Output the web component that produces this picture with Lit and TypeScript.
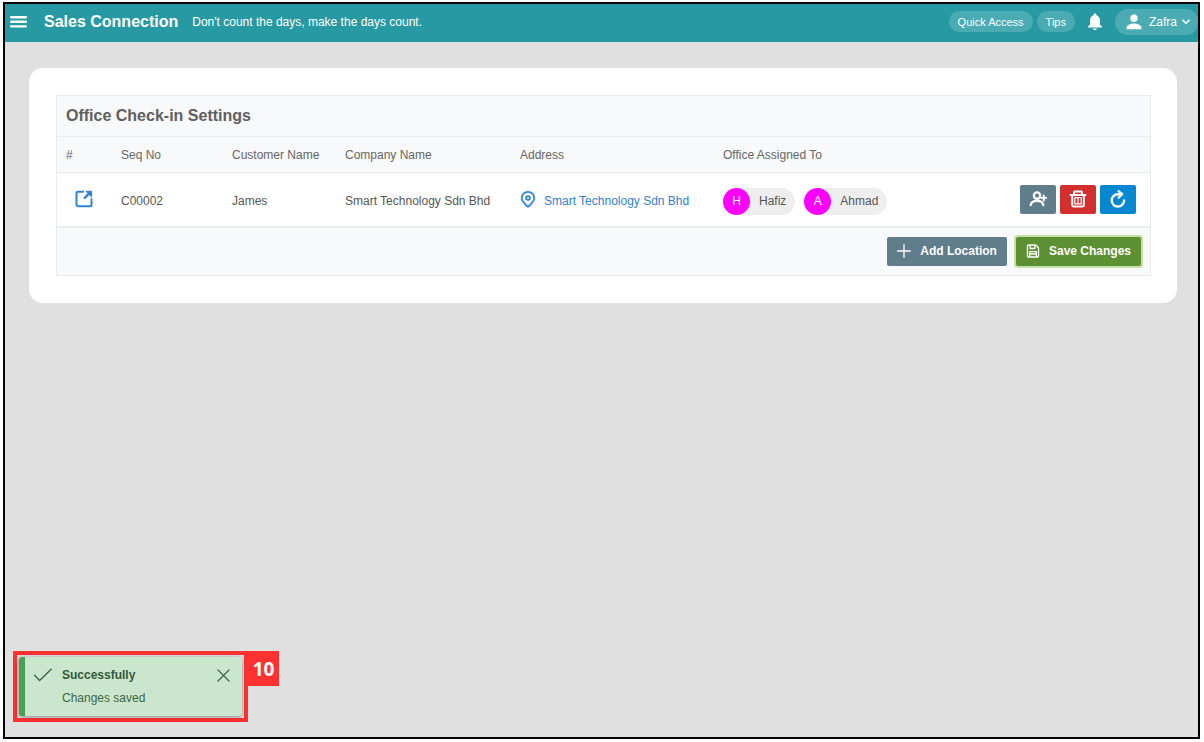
import { LitElement, html, css } from "lit";
import { customElement, property, state } from "lit/decorators.js";

interface Office {
  seq: string;
  customer: string;
  company: string;
  address: string;
  assigned: string[];
}

const icons = {
  menu: html`<svg width="18" height="12" viewBox="0 0 18 12" fill="currentColor" aria-hidden="true">
    <rect y="0" width="17" height="2.4" rx="1" /><rect y="4.6" width="17" height="2.4" rx="1" /><rect y="9.2" width="17" height="2.4" rx="1" /></svg>`,
  bell: html`<svg width="16" height="18" viewBox="0 0 16 18" fill="currentColor" aria-hidden="true">
    <path d="M8 0.4a1.4 1.4 0 0 1 1.4 1.4v.5C11.6 2.9 12.9 4.9 12.9 7.3v4.2l2 2.100v1H1.100v-1l2-2.100V7.3c0-2.400 1.300-4.400 3.500-5v-.5A1.400 1.400 0 0 1 8 .4zM6.200 15.500h3.600a1.800 1.800 0 0 1-3.600 0z" /></svg>`,
  user: html`<svg width="16" height="16" viewBox="0 0 16 16" fill="currentColor" aria-hidden="true">
    <circle cx="8" cy="4.3" r="3.7" /><path d="M.6 15.200v-1.600c0-2.500 4.800-4 7.400-4s7.400 1.500 7.400 4v1.600z" /></svg>`,
  chevron: html`<svg width="8" height="6" viewBox="0 0 8 6" fill="none" stroke="currentColor" stroke-width="1.6" stroke-linecap="round" stroke-linejoin="round" aria-hidden="true">
    <path d="M1 1.200l3 3 3-3" /></svg>`,
  open: html`<svg width="18" height="18" viewBox="0 0 18 18" fill="none" stroke="currentColor" stroke-width="2" stroke-linejoin="round" stroke-linecap="round" aria-hidden="true">
    <path d="M8.200 1.800H3A1.500 1.500 0 0 0 1.500 3.300v11.400A1.500 1.500 0 0 0 3 16.200h12a1.500 1.500 0 0 0 1.500-1.500V9.200" /><path d="M9.800 7.800l4.400-4.400" stroke-width="2.400" /><path d="M11.200 1.300h5.400v5.400z" fill="currentColor" stroke-width="1" /></svg>`,
  pin: html`<svg width="16" height="17" viewBox="0 0 16 17" fill="none" stroke="currentColor" stroke-width="1.8" stroke-linejoin="round" aria-hidden="true">
    <path d="M8 15.800C4.500 12.800 1.700 10.400 1.700 7a6.300 6.100 0 0 1 12.600 0c0 3.400-2.800 5.800-6.300 8.800z" /><circle cx="8" cy="7" r="1.900" /></svg>`,
  assign: html`<svg width="18" height="16" viewBox="0 0 18 16" fill="none" stroke="currentColor" stroke-width="2.200" stroke-linecap="round" aria-hidden="true">
    <circle cx="8" cy="4.600" r="3.200" /><path d="M1.600 14.200c.5-2.900 2.800-4.400 6.400-4.400s5.900 1.500 6.400 4.400" /><path d="M14.800 4.400v5M12.300 6.900h5" stroke-width="1.900" /></svg>`,
  trash: html`<svg width="18" height="18" viewBox="0 0 18 18" fill="none" stroke="currentColor" stroke-width="2" stroke-linecap="round" stroke-linejoin="round" aria-hidden="true">
    <path d="M1.500 5h15M4.800 4.800l.6-3.300h7.200l.6 3.300M3.200 5.200V15a1.500 1.500 0 0 0 1.500 1.500h8.600a1.500 1.500 0 0 0 1.500-1.500V5.200" /><path d="M5.800 7.600h6.400v6.200H5.800zM9 7.600v6.200" stroke-width="1.200" /></svg>`,
  refresh: html`<svg width="18" height="18" viewBox="0 0 18 18" fill="none" stroke="currentColor" stroke-width="2.400" stroke-linecap="round" aria-hidden="true">
    <path d="M10.500 4.200H8.800a6.200 6.200 0 1 0 6.300 6.200" /><path d="M9.600 1.200l3.600 3-3.600 3.400" stroke-width="2.200" stroke-linejoin="round" /></svg>`,
  plus: html`<svg width="14" height="14" viewBox="0 0 14 14" fill="none" stroke="currentColor" stroke-width="1.300" stroke-linecap="round" aria-hidden="true"><path d="M7 .7v12.600M.7 7h12.600" /></svg>`,
  save: html`<svg width="14" height="14" viewBox="0 0 14 14" fill="none" stroke="currentColor" stroke-width="1.300" stroke-linejoin="round" aria-hidden="true">
    <path d="M1.500 2a1 1 0 0 1 1-1h7.200l2.800 2.800V12a1 1 0 0 1-1 1h-9a1 1 0 0 1-1-1z" /><path d="M4.200 1.200v3.300h4.600V1.200M3.700 12.800V7.600h6.600v5.200M3.700 10h6.600" /></svg>`,
  check: html`<svg width="20" height="14" viewBox="0 0 20 14" fill="none" stroke="currentColor" stroke-width="1.400" stroke-linecap="round" stroke-linejoin="round" aria-hidden="true"><path d="M1.600 7.200l5 5.200L18.200 1.200" /></svg>`,
  close: html`<svg width="13" height="13" viewBox="0 0 13 13" fill="none" stroke="currentColor" stroke-width="1.300" stroke-linecap="round" aria-hidden="true"><path d="M1 1l11 11M12 1L1 12" /></svg>`,
};

const reset = css`
  * { box-sizing: border-box; }
  button { margin: 0; border: 0; padding: 0; background: none; color: inherit; font: inherit; cursor: pointer; }
  svg { display: block; flex: none; }
`;

@customElement("top-bar")
class TopBar extends LitElement {
  static styles = [reset, css`
    :host {
      display: flex; align-items: center; box-sizing: border-box; height: 38px; padding: 0 0 3px 5px;
      background: #2799a3; color: #fff; font-size: 12px;
    }
    .menu { display: flex; padding-right: 16px; }
    .brand { font-size: 16px; font-weight: 700; }
    .motto { margin-left: 14px; font-size: 12px; }
    .tools { display: flex; align-items: center; margin-left: auto; }
    .pill { height: 21px; padding: 0 9px; border-radius: 11px; background: #4aabb3; font-size: 11px; margin-right: 4px; }
    .bell { margin: 0 12px 0 8px; }
    .account {
      display: flex; align-items: center; height: 26px; padding: 0 8px 0 11px;
      border-radius: 13px 12px 12px 13px; background: #4aabb3; font-size: 12px;
    }
    .name { margin: 0 5px 0 7px; }
  `];
  render() {
    return html`
      <button class="menu" aria-label="Menu">${icons.menu}</button>
      <span class="brand">Sales Connection</span>
      <span class="motto">Don't count the days, make the days count.</span>
      <div class="tools">
        <button class="pill">Quick Access</button>
        <button class="pill">Tips</button>
        <button class="bell" aria-label="Notifications">${icons.bell}</button>
        <button class="account">${icons.user}<span class="name">Zafra</span>${icons.chevron}</button>
      </div>`;
  }
}

@customElement("user-chip")
class UserChip extends LitElement {
  @property() name = "";
  static styles = [reset, css`
    :host { display: flex; align-items: center; height: 27px; padding-right: 9px; border-radius: 14px; background: #eee; }
    .avatar {
      display: grid; place-items: center; width: 27px; height: 27px; margin-right: 9px;
      border-radius: 50%; background: #f0f; color: #fff; font-size: 12px;
    }
  `];
  render() {
    return html`<span class="avatar">${this.name.charAt(0)}</span>${this.name}`;
  }
}

@customElement("office-table")
class OfficeTable extends LitElement {
  @property({ attribute: false }) offices: Office[] = [];
  static styles = [reset, css`
    :host { display: block; border: 1px solid #e9ebec; color: #555; font-size: 12px; }
    .title { margin: 0; padding: 0 9px; background: #f8f9fa; font-size: 16px; line-height: 40px; color: #5f5f5f; }
    table { width: 100%; border-collapse: collapse; table-layout: fixed; }
    th, td { padding: 0 9px; text-align: left; font-weight: 400; white-space: nowrap; }
    th { height: 36px; background: #f8f9fa; border: solid #e9ebec; border-width: 1px 0; color: #666; }
    td { height: 54px; padding-top: 4px; border-bottom: 2px solid #e9ebec; }
    .c-open { width: 55px; } .c-seq { width: 111px; } .c-customer { width: 113px; }
    .c-company { width: 175px; } .c-address { width: 203px; } .c-actions { width: 140px; }
    a { color: #2f82d0; text-decoration: none; }
    .open { display: block; padding: 0 0 4px 9px; }
    .address { display: flex; align-items: center; gap: 8px; }
    .address svg { margin-bottom: 3px; }
    .chips { display: flex; gap: 9px; }
    .actions { display: flex; justify-content: flex-end; gap: 4px; padding: 0 5px 4px 0; }
    .icon { display: grid; place-items: center; width: 36px; height: 29px; border-radius: 2px; color: #fff; }
    .slate { background: #607d8b; } .red { background: #d32f2f; } .blue { background: #0288d1; } .green { background: #5d9033; }
    .footer { display: flex; justify-content: flex-end; gap: 9px; padding: 9px; background: #f8f9fa; }
    .wide {
      display: flex; align-items: center; height: 29px; padding: 0 10px; gap: 9px; border-radius: 2px;
      color: #fff; font-weight: 700; font-size: 12px;
    }
    .green { box-shadow: 0 0 0 2px #c5e1a5; }
  `];
  render() {
    return html`
      <h2 class="title">Office Check-in Settings</h2>
      <table>
        <colgroup>
          <col class="c-open" /><col class="c-seq" /><col class="c-customer" /><col class="c-company" />
          <col class="c-address" /><col /><col class="c-actions" />
        </colgroup>
        <thead>
          <tr><th>#</th><th>Seq No</th><th>Customer Name</th><th>Company Name</th><th>Address</th><th>Office Assigned To</th><th></th></tr>
        </thead>
        <tbody>
          ${this.offices.map((o) => html`<tr>
            <td><a class="open" href="#" aria-label="Open">${icons.open}</a></td>
            <td>${o.seq}</td>
            <td>${o.customer}</td>
            <td>${o.company}</td>
            <td><a class="address" href="#">${icons.pin}${o.address}</a></td>
            <td><div class="chips">${o.assigned.map((n) => html`<user-chip name=${n}></user-chip>`)}</div></td>
            <td><div class="actions">
              <button class="icon slate" aria-label="Assign user">${icons.assign}</button>
              <button class="icon red" aria-label="Delete">${icons.trash}</button>
              <button class="icon blue" aria-label="Reset">${icons.refresh}</button>
            </div></td>
          </tr>`)}
        </tbody>
      </table>
      <div class="footer">
        <button class="wide slate">${icons.plus}Add Location</button>
        <button class="wide green">${icons.save}Save Changes</button>
      </div>`;
  }
}

@customElement("save-toast")
class SaveToast extends LitElement {
  @property() step = "";
  static styles = [reset, css`
    :host { display: flex; align-items: flex-start; }
    .ring { width: 235px; padding: 2px; border: 4px solid #ff3131; }
    .toast {
      display: grid; grid-template-columns: 20px 1fr auto; align-items: center; column-gap: 9px;
      height: 59px; padding: 7px 12px 7px 8px; border-left: 6px solid #4b9f54; border-radius: 3px;
      background: #cae6cc; color: #3f6645; box-shadow: 0 1px 4px #0006; font-size: 12px; line-height: 22px;
    }
    .heading { color: #32593a; }
    .detail { grid-column: 2; }
    .step {
      display: grid; place-items: center; width: 31px; height: 35px; background: #ff3131; color: #fff;
      font: 700 19px "Open Sans", sans-serif;
    }
  `];
  render() {
    return html`
      <div class="ring">
        <div class="toast" role="status">
          ${icons.check}<strong class="heading">Successfully</strong>
          <button aria-label="Close">${icons.close}</button>
          <span class="detail">Changes saved</span>
        </div>
      </div>
      <span class="step">${this.step}</span>`;
  }
}

@customElement("app-root")
class AppRoot extends LitElement {
  @state() offices: Office[] = [
    { seq: "C00002", customer: "James", company: "Smart Technology Sdn Bhd", address: "Smart Technology Sdn Bhd", assigned: ["Hafiz", "Ahmad"] },
  ];
  static styles = [reset, css`
    :host {
      display: flex; box-sizing: border-box; min-height: 100vh; padding: 2px 4px 3px 3px;
      background: #fff; font-family: "Liberation Sans", Arial, sans-serif;
    }
    .frame { display: flex; flex-direction: column; flex: 1; min-width: 0; border: 2px solid #000; background: #e0e0e0; }
    .card { margin: 26px 21px 0 24px; padding: 27px 26px 27px 27px; border-radius: 14px; background: #fff; }
    .toast { margin: auto 0 15px 8px; }
  `];
  render() {
    return html`
      <div class="frame">
        <top-bar></top-bar>
        <main class="card"><office-table .offices=${this.offices}></office-table></main>
        <save-toast class="toast" step="10"></save-toast>
      </div>`;
  }
}
